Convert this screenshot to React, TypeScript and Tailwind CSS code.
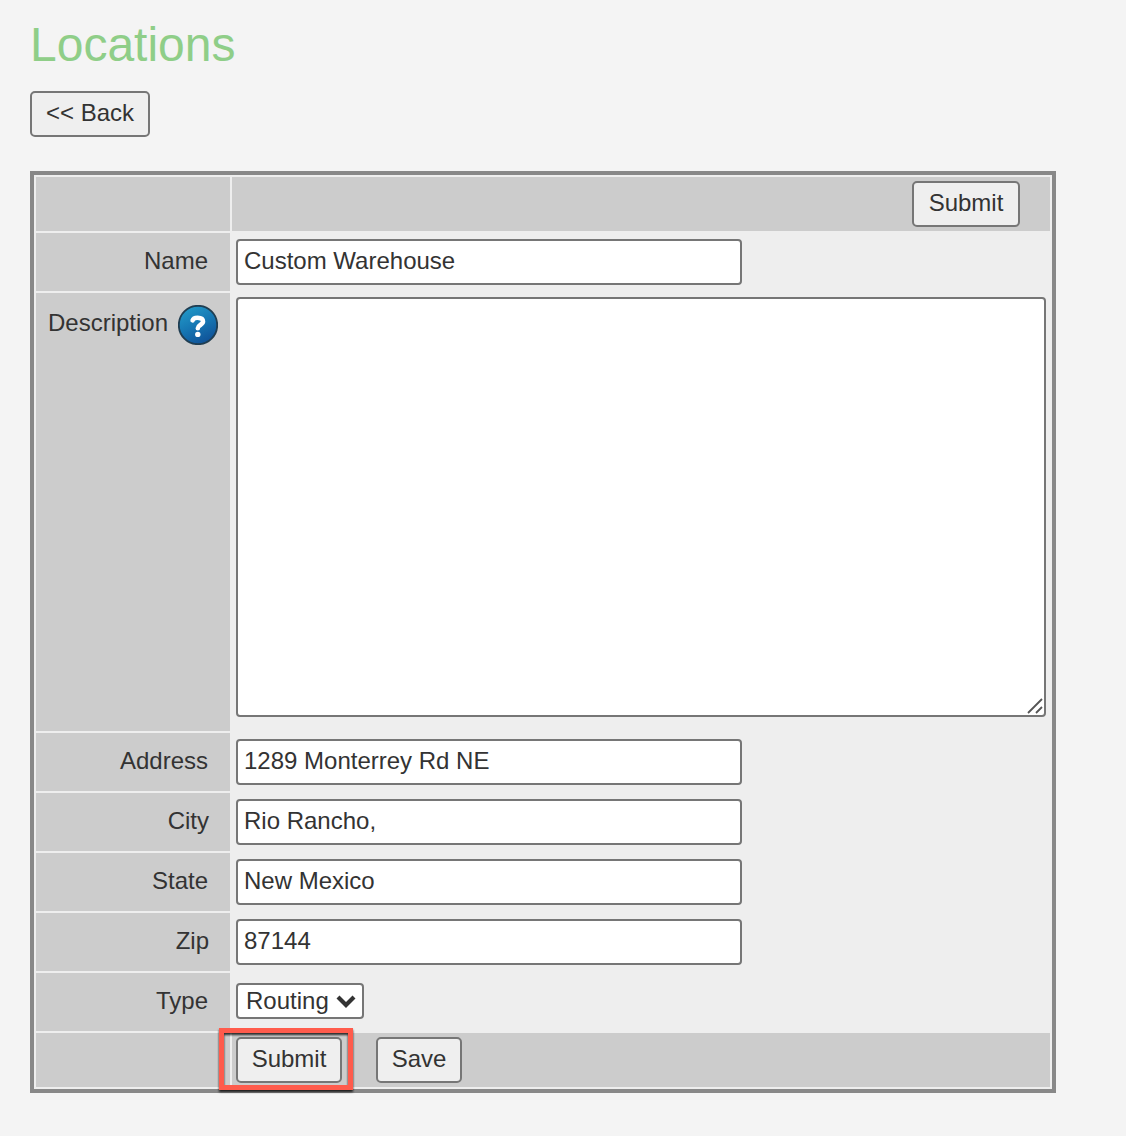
import React from 'react';

interface TextRow {
  label: string;
  name: string;
  value: string;
  labelClass?: string;
}

const addressRows: TextRow[] = [
  { label: 'Address', name: 'address', value: '1289 Monterrey Rd NE' },
  { label: 'City', name: 'city', value: 'Rio Rancho,', labelClass: 'pr-[21px]' },
  { label: 'State', name: 'state', value: 'New Mexico' },
  { label: 'Zip', name: 'zip', value: '87144', labelClass: 'pr-[21px]' },
];

function Button({ children, className }: { children: React.ReactNode; className: string }) {
  return (
    <button
      type="button"
      className={`flex h-[46px] shrink-0 justify-center rounded-[5px] border-2 border-[#767676] bg-[#efefef] pt-[6px] leading-7 whitespace-nowrap ${className}`}
    >
      {children}
    </button>
  );
}

function LabelCell({ children, className = 'pr-[22px]' }: { children?: React.ReactNode; className?: string }) {
  return (
    <div className={`flex w-[194px] shrink-0 items-start justify-end bg-[#ccc] pt-[14px] leading-7 ${className}`}>
      {children}
    </div>
  );
}

function TextField({ label, name, value, labelClass }: TextRow) {
  return (
    <div className="flex h-[58px] gap-[2px]">
      <LabelCell className={labelClass}>{label}</LabelCell>
      <div className="flex-1 px-1 pt-[6px]">
        <input
          type="text"
          name={name}
          defaultValue={value}
          className="block h-[46px] w-[506px] rounded-[4px] border-2 border-[#767676] bg-white px-[6px] pb-[2px] outline-none"
        />
      </div>
    </div>
  );
}

function HelpIcon() {
  return (
    <svg width="40" height="40" viewBox="0 0 40 40" className="block shrink-0">
      <defs>
        <linearGradient id="help-fill" x1="0.2" y1="0" x2="0.7" y2="1">
          <stop offset="0" stopColor="#239bc9" />
          <stop offset="0.5" stopColor="#1677b3" />
          <stop offset="1" stopColor="#0f4f96" />
        </linearGradient>
      </defs>
      <circle cx="20" cy="20" r="19.2" fill="url(#help-fill)" stroke="#203e52" strokeWidth="1.8" />
      <path
        d="M14.6 15.4C15.2 13.4 17 12.8 19.6 12.8C23 12.8 25 14 25 16.6C25 19.8 19.8 20.2 19.8 23.2"
        fill="none"
        stroke="#fff"
        strokeWidth="4.6"
        strokeLinecap="round"
        strokeLinejoin="round"
      />
      <circle cx="19.8" cy="29.4" r="2.7" fill="#fff" />
    </svg>
  );
}

export default function App() {
  return (
    <div className="min-h-screen bg-[#f4f4f4] px-[30px] pt-[17px] font-['Liberation_Sans',Arial,sans-serif] text-[24px] text-[#333]">
      <h1 className="h-[74px] text-[48px] leading-[56px] text-[#8fce88]">Locations</h1>
      <Button className="w-[120px]">&lt;&lt; Back</Button>

      <form className="mt-[34px] flex w-[1026px] flex-col gap-[2px] border-4 border-[#888] bg-[#eee] p-[2px]">
        <div className="flex h-[54px] gap-[2px]">
          <LabelCell />
          <div className="flex flex-1 justify-end bg-[#ccc] pt-1 pr-[30px]">
            <Button className="w-[108px]">Submit</Button>
          </div>
        </div>

        <TextField label="Name" name="name" value="Custom Warehouse" />

        <div className="flex h-[438px] gap-[2px]">
          <div className="flex w-[194px] shrink-0 items-start justify-end gap-[10px] bg-[#ccc] pt-3 pr-3">
            <span className="pt-1 leading-7">Description</span>
            <HelpIcon />
          </div>
          <div className="relative flex-1 px-1 pt-1">
            <textarea
              name="description"
              className="block h-[420px] w-[810px] resize-none rounded-[4px] border-2 border-[#767676] bg-white p-[6px] outline-none"
            />
            {/* resize grip */}
            <svg
              width="16"
              height="16"
              viewBox="0 0 16 16"
              className="absolute right-[7px] bottom-[17px]"
              fill="none"
              stroke="#555"
              strokeWidth="1.8"
            >
              <path d="M1 15L15 1M9 15L15 9" />
            </svg>
          </div>
        </div>

        {addressRows.map(row => (
          <TextField key={row.name} {...row} />
        ))}

        <div className="flex h-[58px] gap-[2px]">
          <LabelCell>Type</LabelCell>
          <div className="flex-1 px-1 pt-[10px]">
            <div className="flex h-9 w-32 items-start rounded-[4px] border-2 border-[#767676] bg-white pl-2 leading-8">
              <span>Routing</span>
              <svg width="20" height="14" viewBox="0 0 20 14" className="mt-[10px] ml-[7px]" fill="none">
                <path d="M2 2L10 10L18 2" stroke="#333" strokeWidth="4.2" />
              </svg>
            </div>
          </div>
        </div>

        <div className="flex h-[54px] gap-[2px]">
          <LabelCell />
          <div className="flex flex-1 gap-[34px] bg-[#ccc] px-1 pt-1">
            <div className="relative">
              <Button className="w-[106px]">Submit</Button>
              {/* highlight around the submit button */}
              <div className="pointer-events-none absolute -top-[9px] -left-[17px] h-[62px] w-[134px] border-[5px] border-[#ff5b4c] drop-shadow-[0_2px_1px_rgba(0,0,0,0.8)]" />
            </div>
            <Button className="w-[86px]">Save</Button>
          </div>
        </div>
      </form>
    </div>
  );
}
